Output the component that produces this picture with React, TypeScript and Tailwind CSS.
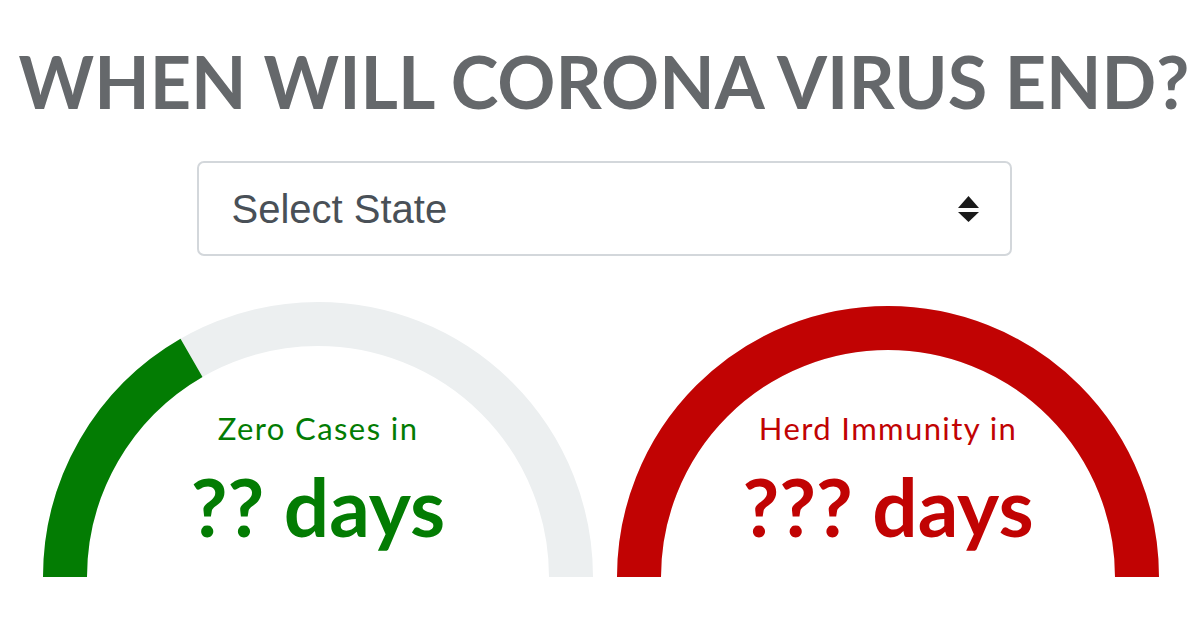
import React from "react";

function Gauge({
  color,
  fraction,
  label,
  value,
  outer,
}: {
  color: string;
  fraction: number;
  label: string;
  value: string;
  outer: number;
}) {
  const sw = 44;
  const w = outer * 2;
  const cx = outer;
  const cy = outer;
  const r = outer - sw / 2;
  const ang = Math.PI - fraction * Math.PI;
  const ex = cx + r * Math.cos(ang);
  const ey = cy - r * Math.sin(ang);
  return (
    <div className="relative shrink-0" style={{ width: w, height: outer + 1 }}>
      <svg className="absolute inset-0" width={w} height={outer + 1} viewBox={`0 0 ${w} ${outer + 1}`}>
        <path d={`M ${cx - r} ${cy} A ${r} ${r} 0 0 1 ${cx + r} ${cy}`} fill="none" stroke="#eceff0" strokeWidth={sw} />
        <path d={`M ${cx - r} ${cy} A ${r} ${r} 0 0 1 ${ex} ${ey}`} fill="none" stroke={color} strokeWidth={sw} />
      </svg>
      <div className="absolute inset-x-0 bottom-0 h-[276px] flex flex-col items-center pt-[111px]" style={{ color }}>
        <div className="text-[31px] leading-none font-normal tracking-[1.4px]">{label}</div>
        <div className="text-[80px] leading-none font-bold mt-[22px]">{value}</div>
      </div>
    </div>
  );
}

export default function App() {
  return (
    <div
      className="w-[1200px] h-[630px] bg-white overflow-hidden"
      style={{ fontFamily: "Lato, 'Open Sans', sans-serif" }}
    >
      <h1 className="pt-[45px] pl-[8px] text-center text-[72px] leading-none font-bold text-[#65686b] whitespace-nowrap">
        WHEN WILL CORONA VIRUS END?
      </h1>
      <div className="mt-[44px] flex justify-center">
        <div className="w-[815px] h-[95px] ml-[8px] border-2 border-[#d3d7db] rounded-[7px] flex items-center justify-between pl-[33px] pr-[31px]">
          <span
            className="text-[40px] text-[#495057]"
            style={{ fontFamily: "'Liberation Sans', Arial, sans-serif" }}
          >
            Select State
          </span>
          <svg width="21" height="26" viewBox="0 0 21 26">
            <polygon points="10.5,0 21,12 0,12" fill="#1a1a1a" />
            <polygon points="0,16 21,16 10.5,26" fill="#1a1a1a" />
          </svg>
        </div>
      </div>
      <div className="mt-[46px] flex items-end pl-[43px] gap-[24px]">
        <Gauge outer={275} color="#037c03" fraction={1 / 3} label="Zero Cases in" value="?? days" />
        <Gauge outer={271} color="#c10303" fraction={1} label="Herd Immunity in" value="??? days" />
      </div>
    </div>
  );
}
